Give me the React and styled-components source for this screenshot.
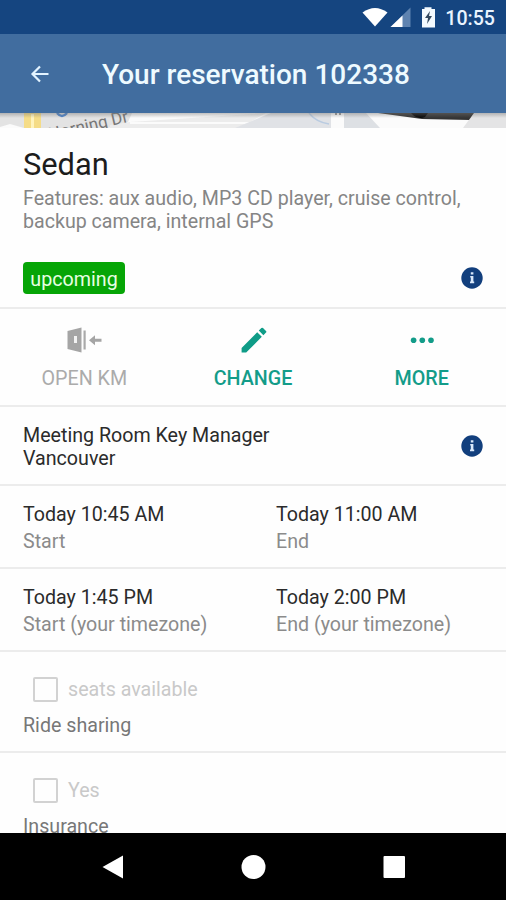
import React from 'react';
import styled, { createGlobalStyle } from 'styled-components';

const GlobalStyle = createGlobalStyle`
  * {
    box-sizing: border-box;
  }

  body {
    margin: 0;
    background: #fefefe;
    font-family: Roboto, sans-serif;
  }
`;

const Screen = styled.div`
  display: flex;
  flex-direction: column;
  width: 506px;
  height: 900px;
  overflow: hidden;
`;

const StatusBar = styled.div`
  display: flex;
  flex: none;
  align-items: center;
  justify-content: flex-end;
  height: 34px;
  padding: 3px 11px 0 0;
  background: #154580;
  color: #e9f4ff;
`;

const StatusIcons = styled.svg`
  display: block;
  margin-right: 8px;
`;

const Clock = styled.span`
  font-size: 19.6px;
  font-weight: 500;
  line-height: 32px;
`;

const AppBar = styled.header`
  display: flex;
  flex: none;
  align-items: center;
  height: 79px;
  padding-left: 28px;
  background: #416d9f;
  color: #eefaff;
`;

const Title = styled.h1`
  margin: 2px 0 0 50px;
  font-size: 28px;
  font-weight: 500;
  line-height: 34px;
  white-space: nowrap;
`;

const MapStrip = styled.svg`
  display: block;
  flex: none;
`;

const Content = styled.main`
  flex: 1;
  min-height: 0;
  overflow: hidden;
`;

const Section = styled.section`
  height: ${(props) => props.height}px;
  padding: ${(props) => props.pad || '0'};
  border-bottom: 2px solid #ececec;
`;

const CarName = styled.h2`
  margin: 0;
  font-size: 30.8px;
  font-weight: 400;
  line-height: 36px;
  color: #1c1c1c;
`;

const Features = styled.p`
  margin: 4px 0 0;
  font-size: 19.62px;
  line-height: 23px;
  color: #858585;
  white-space: nowrap;
`;

const Row = styled.div`
  display: flex;
  align-items: ${(props) => props.align || 'center'};
  justify-content: space-between;
  margin-top: ${(props) => props.top || 0}px;
`;

const Badge = styled.span`
  width: 102px;
  height: 32px;
  border-radius: 4px;
  background: #06a506;
  color: #e6ffe2;
  font-size: 19.7px;
  line-height: 35px;
  text-align: center;
`;

const Actions = styled.div`
  display: grid;
  grid-template-columns: repeat(3, 1fr);
`;

const Action = styled.div`
  display: flex;
  flex-direction: column;
  align-items: center;
  padding-top: 13px;
  font-size: 19.7px;
  font-weight: ${(props) => (props.disabled ? 400 : 500)};
  line-height: 24px;
  color: ${(props) => (props.disabled ? '#ababab' : '#139c89')};

  svg {
    display: block;
    margin-bottom: 13px;
  }
`;

const Text = styled.div`
  font-size: 19.65px;
  line-height: ${(props) => props.line || 23}px;
  color: #2b2b2b;
  white-space: nowrap;
`;

const Label = styled(Text)`
  color: ${(props) => props.color || '#8b8b8b'};
`;

const Times = styled.div`
  display: grid;
  grid-template-columns: 253px 1fr;
`;

const CheckRow = styled.div`
  display: flex;
  align-items: center;
  gap: 10px;
  height: 26px;
  margin: 0 0 12px 10px;
`;

const Checkbox = styled.span`
  width: 25px;
  height: 25px;
  border: 2px solid #d2d2d2;
  border-radius: 2px;
`;

const NavBar = styled.nav`
  flex: none;
  height: 67px;
  background: #000;
`;

function InfoIcon() {
  return (
    <svg width="22" height="22" viewBox="0 0 22 22">
      <circle cx="11" cy="11" r="10.7" fill="#123f7d" />
      <path d="M9.8 5.2h2.6v2.4H9.8zM9.2 9h3.2v5.6h.8v1.6H9v-1.6h.8v-4h-.6z" fill="#d9e8fa" />
    </svg>
  );
}

function DoorIcon() {
  return (
    <svg width="36" height="28" viewBox="0 0 36 28">
      <path d="M1.5 5L15.5 1.5v25L1.5 23z" fill="#a5a5a5" />
      <path d="M8 10h3v7H8z" fill="#f2f2f2" />
      <path d="M17.5 4.5h2.2v19h-2.2z" fill="#aaa" />
      <path d="M23 14.2l6-5v3.5h6.5v3H29v3.5z" fill="#a5a5a5" />
    </svg>
  );
}

function PencilIcon() {
  return (
    <svg width="34" height="28" viewBox="-4 0 34 28">
      <path d="M1.6 22L17.2 6.2l4.6 4.6L6.2 26.5H1.6zM18.8 4.6l2.6-2.6q.8-.7 1.6 0l3 3q.8.8 0 1.6l-2.6 2.6z" fill="#0f9c87" />
    </svg>
  );
}

function MoreIcon() {
  return (
    <svg width="28" height="28" viewBox="0 0 28 28" fill="#139c89">
      <circle cx="5.6" cy="14.3" r="2.8" />
      <circle cx="14.3" cy="14.3" r="2.8" />
      <circle cx="23" cy="14.3" r="2.8" />
    </svg>
  );
}

function TimeSection({ start, end, suffix = '' }) {
  return (
    <Section height={83} pad="15px 23px 0">
      <Times>
        <div>
          <Text line={27}>{start}</Text>
          <Label line={27}>Start{suffix}</Label>
        </div>
        <div>
          <Text line={27}>{end}</Text>
          <Label line={27}>End{suffix}</Label>
        </div>
      </Times>
    </Section>
  );
}

function OptionSection({ option, label }) {
  return (
    <Section height={101} pad="24px 23px 0">
      <CheckRow>
        <Checkbox />
        <Label color="#c9c9c9">{option}</Label>
      </CheckRow>
      <Label color="#777">{label}</Label>
    </Section>
  );
}

export default function App() {
  return (
    <Screen>
      <GlobalStyle />
      <StatusBar>
        <StatusIcons width="76" height="24" viewBox="361 6 76 24">
          <path d="M362.5 11.5Q375 2.5 387.5 11.5L375 25.5z" fill="#fff" />
          <path d="M410.5 6.5V26h-20z" fill="#5f83b0" />
          <path d="M402.5 14.5V26h-12z" fill="#fff" />
          <path d="M422 8h2.5V6.2h7V8h3.5v18.5h-13z" fill="#f4faff" />
          <path d="M430 10l-5 7h3l-1 6 5-8h-3z" fill="#32485e" />
        </StatusIcons>
        <Clock>10:55</Clock>
      </StatusBar>
      <AppBar>
        <svg width="24" height="24" viewBox="0 0 24 24">
          <path d="M20.5 12H5M12 4.5L4.5 12l7.5 7.5" fill="none" stroke="#e2f3ff" strokeWidth="2.2" />
        </svg>
        <Title>Your reservation 102338</Title>
      </AppBar>
      <MapStrip width="506" height="15" viewBox="0 0 506 15">
        <defs>
          <linearGradient id="shade" x1="0" y1="0" x2="0" y2="1">
            <stop offset="0" stopColor="#777" stopOpacity=".45" />
            <stop offset="1" stopColor="#777" stopOpacity="0" />
          </linearGradient>
        </defs>
        <path d="M0 0h506v15H0z" fill="#fbfbfb" />
        <path d="M0 0h132l-4 9-20 6H24L10 11 0 14z" fill="#e3e3e3" />
        <path d="M266 0l-16 9H130v2h123v4H110v-3l20-3z" fill="#ececec" />
        <path d="M235 15l36-15h60v15z" fill="#e0e2e6" />
        <path d="M344 0h22l14 15h-36z" fill="#dde0e4" />
        <path d="M463 15l11-15h32v15z" fill="#e4e4e5" />
        <path d="M24 0h17v15H24z" fill="#f5dc87" />
        <path d="M32.5 1v14" stroke="#fff3bd" strokeWidth="3" />
        <path d="M309 0q7 9 20 11" fill="none" stroke="#b9cbe1" strokeWidth="1.5" />
        <path d="M57 0q5 6 10 0" fill="none" stroke="#4d83c9" strokeWidth="2.5" />
        <path d="M335 1h2M339 1h2" stroke="#777" strokeWidth="1.5" />
        <path d="M378 0h96l-5 7-47-1z" fill="#343434" />
        <path d="M411 0h17l-3 4q-8 3-14-4" fill="#050505" />
        <text x="50" y="27" fill="#777" fontSize="17" transform="rotate(-13 50 27)">Horning Dr</text>
        <path d="M0 0h506v5H0z" fill="url(#shade)" />
      </MapStrip>
      <Content>
        <Section height={181} pad="19px 23px 0">
          <CarName>Sedan</CarName>
          <Features>
            Features: aux audio, MP3 CD player, cruise control,
            <br />
            backup camera, internal GPS
          </Features>
          <Row top={29}>
            <Badge>upcoming</Badge>
            <InfoIcon />
          </Row>
        </Section>
        <Section height={98} pad="4px 0 0">
          <Actions>
            <Action disabled>
              <DoorIcon />
              OPEN KM
            </Action>
            <Action>
              <PencilIcon />
              CHANGE
            </Action>
            <Action>
              <MoreIcon />
              MORE
            </Action>
          </Actions>
        </Section>
        <Section height={79} pad="17px 23px 0">
          <Row align="flex-start">
            <Text>
              Meeting Room Key Manager
              <br />
              Vancouver
            </Text>
            <Row top={11}>
              <InfoIcon />
            </Row>
          </Row>
        </Section>
        <TimeSection start="Today 10:45 AM" end="Today 11:00 AM" />
        <TimeSection start="Today 1:45 PM" end="Today 2:00 PM" suffix=" (your timezone)" />
        <OptionSection option="seats available" label="Ride sharing" />
        <OptionSection option="Yes" label="Insurance" />
      </Content>
      <NavBar>
        <svg width="506" height="67" viewBox="0 0 506 67" fill="#fff">
          <path d="M102.5 34L123 22.5v23z" />
          <circle cx="253.5" cy="34" r="12" />
          <rect x="383.5" y="23" width="21.5" height="22" rx="1" />
        </svg>
      </NavBar>
    </Screen>
  );
}
